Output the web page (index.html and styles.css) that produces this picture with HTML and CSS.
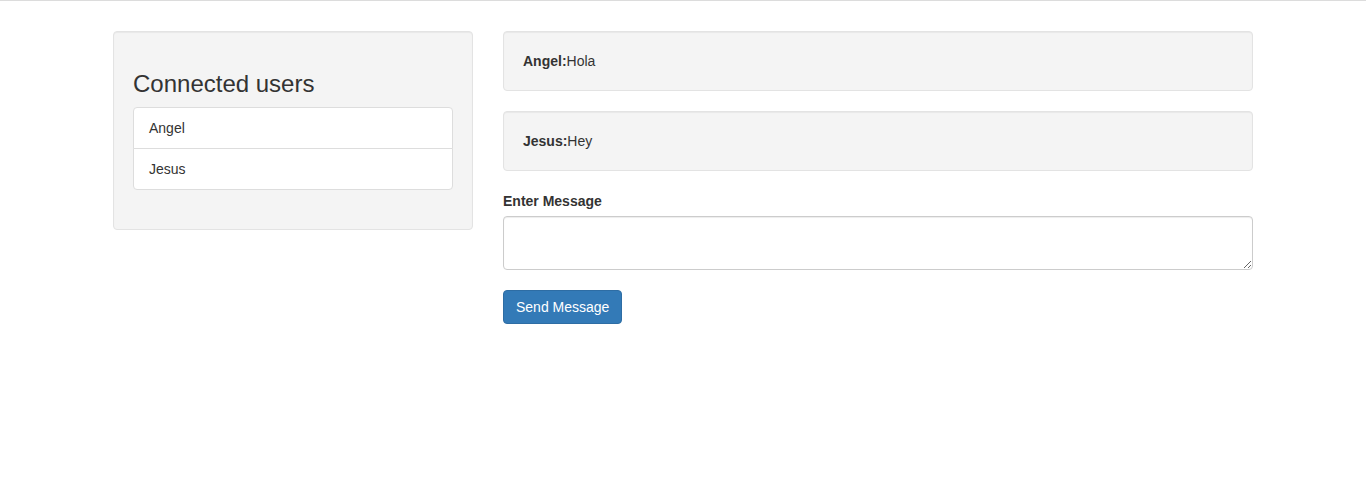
FILE: index.html
```html
<!DOCTYPE html>
<html>
<head>
<meta charset="utf-8">
<title>Chat</title>
<link rel="stylesheet" href="styles.css">
</head>
<body>
<div class="topline"></div>
<div class="container">
  <div class="row">
    <div class="col-side">
      <div class="well">
        <h3 class="title">Connected users</h3>
        <ul class="list-group">
          <li class="list-group-item">Angel</li>
          <li class="list-group-item">Jesus</li>
        </ul>
      </div>
    </div>
    <div class="col-main">
      <div class="well msg"><strong>Angel:</strong>Hola</div>
      <div class="well msg"><strong>Jesus:</strong>Hey</div>
      <div class="form-group">
        <label class="label" for="m">Enter Message</label>
        <textarea id="m" class="form-control" rows="2"></textarea>
      </div>
      <button class="btn">Send Message</button>
    </div>
  </div>
</div>
</body>
</html>
```
FILE: styles.css
```css
* { box-sizing: border-box; }
html, body { margin: 0; padding: 0; background: #fff; }
body {
  font-family: "Liberation Sans", Arial, sans-serif;
  font-size: 14px;
  line-height: 20px;
  color: #333;
}
.topline { height: 1px; background: #dcdcdc; }
.container {
  width: 1170px;
  margin: 0 auto;
  padding: 30px 15px 0;
}
.row { display: flex; margin: 0 -15px; }
.col-side { width: 390px; padding: 0 15px; }
.col-main { width: 780px; padding: 0 15px; }
.well {
  padding: 19px;
  margin-bottom: 20px;
  background: #f4f4f4;
  border: 1px solid #e3e3e3;
  border-radius: 4px;
  box-shadow: inset 0 1px 1px rgba(0,0,0,.05);
}
.title {
  font-size: 24px;
  font-weight: 500;
  line-height: 26.4px;
  margin: 20px 0 10px;
}
.list-group { list-style: none; margin: 0 0 20px; padding: 0; }
.list-group-item {
  padding: 10px 15px;
  background: #fff;
  border: 1px solid #ddd;
  margin-bottom: -1px;
}
.list-group-item:first-child { border-radius: 4px 4px 0 0; }
.list-group-item:last-child { border-radius: 0 0 4px 4px; margin-bottom: 0; }
.msg strong { font-weight: bold; }
.form-group { margin-bottom: 20px; }
.label {
  display: inline-block;
  margin-bottom: 5px;
  font-weight: bold;
}
.form-control {
  display: block;
  width: 100%;
  height: 54px;
  padding: 6px 12px;
  font: inherit;
  color: #555;
  background: #fff;
  border: 1px solid #ccc;
  border-radius: 4px;
  box-shadow: inset 0 1px 1px rgba(0,0,0,.075);
  resize: vertical;
}
.btn {
  display: inline-block;
  padding: 6px 12px;
  font: inherit;
  line-height: 20px;
  color: #fff;
  background: #337ab7;
  border: 1px solid #2e6da4;
  border-radius: 4px;
  cursor: pointer;
}
```
